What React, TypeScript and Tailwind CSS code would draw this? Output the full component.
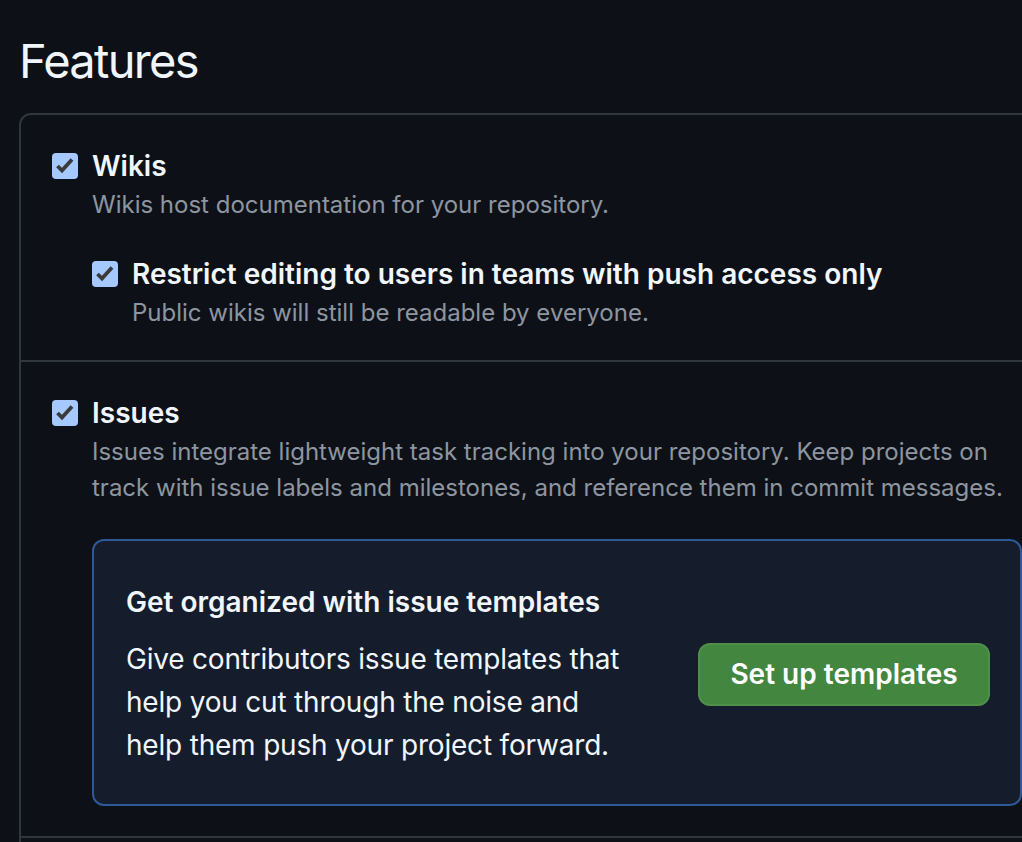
import React from 'react';

function Checkbox() {
  return (
    <span className="mt-[8px] mr-[14px] flex h-[26px] w-[26px] shrink-0 items-center justify-center rounded-[4px] bg-[#a5c8ff]">
      <svg width="26" height="26" viewBox="0 0 26 26">
        <path d="M5.5 13 L10 17.5 L20 6.5" fill="none" stroke="#3a3a3a" strokeWidth="3.8" strokeLinejoin="miter" />
      </svg>
    </span>
  );
}

function Option({ label, note, children }: { label: string; note: React.ReactNode; children?: React.ReactNode }) {
  return (
    <div className="flex items-start">
      <Checkbox />
      <div className="min-w-0 flex-1">
        <div className="text-[28px] leading-[42px] font-semibold text-[#f0f6fc]">{label}</div>
        <div className="text-[24px] leading-[36px] text-[#8d96a0]">{note}</div>
        {children}
      </div>
    </div>
  );
}

export default function App() {
  return (
    <div className="h-[842px] w-full overflow-hidden bg-[#0d1117] pl-[19px] pt-[32px] font-['Inter',sans-serif] antialiased">
      <h2 className="mb-[23px] text-[47px] leading-[58px] font-normal tracking-[-1.7px] text-[#f0f6fc]">Features</h2>

      <div className="w-[1036px] rounded-[12px] border-2 border-[#30363d]">
        {/* Wikis */}
        <div className="px-[31px] pt-[30px] pb-[29px]">
          <Option label="Wikis" note="Wikis host documentation for your repository.">
            <div className="mt-[30px]">
              <Option
                label="Restrict editing to users in teams with push access only"
                note="Public wikis will still be readable by everyone."
              />
            </div>
          </Option>
        </div>

        {/* Issues */}
        <div className="border-t-2 border-[#30363d] px-[31px] pt-[30px] pb-[30px]">
          <Option
            label="Issues"
            note="Issues integrate lightweight task tracking into your repository. Keep projects on track with issue labels and milestones, and reference them in commit messages."
          >
            <div className="mt-[33px] flex items-center justify-between rounded-[12px] border-2 border-[#2d5996] bg-[#151d2c] pt-[40px] pb-[37px] pl-[32px] pr-[30px]">
              <div className="w-[500px]">
                <h3 className="mb-[15px] text-[28px] leading-[42px] font-semibold text-[#f0f6fc]">
                  Get organized with issue templates
                </h3>
                <p className="text-[28px] leading-[43px] tracking-[-0.2px] text-[#f0f6fc]">
                  Give contributors issue templates that help you cut through the noise and help them push your project forward.
                </p>
              </div>
              <button className="h-[63px] w-[292px] rounded-[12px] border-2 border-[#4f9049] bg-[#438640] text-[28px] font-semibold text-white">
                Set up templates
              </button>
            </div>
          </Option>
        </div>

        {/* next section, below the fold */}
        <div className="h-[80px] border-t-2 border-[#30363d]" />
      </div>
    </div>
  );
}
